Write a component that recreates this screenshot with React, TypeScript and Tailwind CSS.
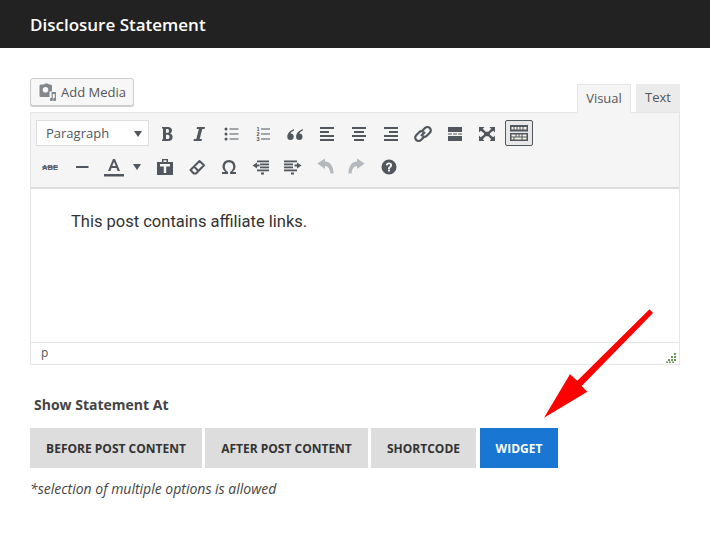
import React from 'react';

const ICON = '#50575e';

// tinymce toolbar glyphs, 20x20 box
function Svg({ children, color = ICON }: { children: React.ReactNode; color?: string }) {
  return (
    <svg width="20" height="20" viewBox="0 0 20 20" fill={color} xmlns="http://www.w3.org/2000/svg">
      {children}
    </svg>
  );
}

function Btn({ children }: { children: React.ReactNode }) {
  return <div className="w-8 h-[26px] flex items-center justify-center shrink-0">{children}</div>;
}

const lines = (rows: [number, number, number][], h = 2) =>
  rows.map(([x, y, w], i) => <rect key={i} x={x} y={y} width={w} height={h} />);

const quote = 'M9 5C5 6.500 2.300 9.500 2.300 12.800a3.200 3.200 0 1 0 3.200-3.200c.3-1 1.500-1.900 3.500-3z';

const row1 = [
  // bold
  <Svg key="b"><path d="M5 3h6c2.500 0 4 1.300 4 3.500 0 1.400-.8 2.500-2 3 1.600.4 2.600 1.700 2.600 3.400C15.600 15.500 14 17 11.200 17H5v-1.500h1V4.500H5zm4 2v3.800h1.400c1 0 1.600-.7 1.600-1.900S11.400 5 10.400 5zm0 5.700V15h1.700c1.100 0 1.800-.8 1.800-2.100s-.7-2.200-1.800-2.200z" /></Svg>,
  // italic
  <Svg key="i"><path d="M8 3h8l-.4 2h-2.300l-2.600 10h2.200l-.4 2H4.500l.4-2h2.400L9.900 5H7.600z" /></Svg>,
  // bullet list
  <Svg key="ul"><circle cx="5" cy="5" r="1.500" /><circle cx="5" cy="10" r="1.500" /><circle cx="5" cy="15" r="1.500" /><rect x="8.500" y="4.500" width="9" height="1" /><rect x="8.500" y="9.500" width="9" height="1" /><rect x="8.500" y="14.500" width="9" height="1" /></Svg>,
  // numbered list
  <Svg key="ol"><text x="3.500" y="6.500" fontSize="5.500" fontWeight="700" fontFamily="'Liberation Sans', sans-serif">1</text><text x="3.500" y="11.500" fontSize="5.500" fontWeight="700" fontFamily="'Liberation Sans', sans-serif">2</text><text x="3.500" y="16.500" fontSize="5.500" fontWeight="700" fontFamily="'Liberation Sans', sans-serif">3</text><rect x="8" y="4.500" width="9" height="1" /><rect x="8" y="9.500" width="9" height="1" /><rect x="8" y="14.500" width="9" height="1" /></Svg>,
  // blockquote
  <Svg key="q"><path d={quote} /><path d={quote} transform="translate(8.800 0)" /></Svg>,
  // align left
  <Svg key="al">{lines([[3, 3, 14], [3, 7, 9], [3, 11, 14], [3, 15, 14]])}</Svg>,
  // align center
  <Svg key="ac">{lines([[3, 3, 14], [5, 7, 10], [3, 11, 14], [5, 15, 10]])}</Svg>,
  // align right
  <Svg key="ar">{lines([[3, 3, 14], [8, 7, 9], [3, 11, 14], [3, 15, 14]])}</Svg>,
  // link
  <Svg key="link"><path fill="none" stroke={ICON} strokeWidth="2.200" d="M8 12l4-4M9.500 6.500l2.500-2.500a3.400 3.400 0 0 1 4.800 0 3.400 3.400 0 0 1 0 4.800l-3 3a3.400 3.400 0 0 1-4.200.4M10.500 13.500l-2.500 2.500a3.400 3.400 0 0 1-4.800 0 3.400 3.400 0 0 1 0-4.800l3-3a3.400 3.400 0 0 1 4.200-.4" /></Svg>,
  // read more
  <Svg key="more"><path d="M3 3h14v5H3zM3 12h14v5H3z" /><rect x="3" y="9.500" width="4" height="1" /><rect x="8" y="9.500" width="4" height="1" /><rect x="13" y="9.500" width="4" height="1" /></Svg>,
  // fullscreen
  <Svg key="fs"><path d="M2 3h5.500L5.800 4.700 8.600 7.800h2.800l2.800-3.100L12.500 3H18v5.500l-1.700-1.700-3.300 2.400v1.600l3.300 2.400 1.700-1.700V17h-5.500l1.700-1.700-2.800-3.100H8.600l-2.800 3.100L7.500 17H2v-5.500l1.700 1.700L7 10.800V9.200L3.700 6.800 2 8.500z" /></Svg>,
];

const row2 = [
  // strikethrough ABC
  <Svg key="abe"><text x="10" y="13" textAnchor="middle" fontSize="7.500" fontWeight="700" fontFamily="'Liberation Sans', sans-serif">ABE</text><rect x="2" y="9.500" width="16" height="1" /></Svg>,
  <Svg key="hr"><rect x="4" y="9" width="12.500" height="2" /></Svg>,
  // text colour
  <Svg key="a"><path d="M9 2h2l5 12h-2.400l-1.100-3h-5l-1.100 3H4zm1 2.800L8.200 9h3.600z" /><rect x="0" y="17" width="20" height="2.500" /></Svg>,
];

const row3 = [
  // paste as text
  <Svg key="paste"><path fillRule="evenodd" d="M7 2h6v3h5v13H2V5h5zM8.500 3.200v1.800h3V3.200zM5 7v2.500h3.800V16h2.400V9.500H15V7z" /></Svg>,
  // eraser
  <Svg key="eraser"><path fill="none" stroke={ICON} strokeWidth="2" strokeLinejoin="round" d="M12.500 4l4.500 4.200-8 8.300h-2.200L3.500 13zM7 9.500l4.500 4.500" /></Svg>,
  // omega
  <Svg key="omega"><path d="M3 17v-2h3.500C4.500 13.500 3.500 11.500 3.500 9.500 3.500 5.800 6.300 3 10 3s6.500 2.800 6.500 6.500c0 2-1 4-3 5.500H17v2h-6v-2c2-1 3.200-3 3.200-5.500 0-2.500-1.700-4.300-4.200-4.300S5.800 7 5.800 9.500c0 2.500 1.200 4.500 3.200 5.500v2z" /></Svg>,
  // outdent
  <Svg key="outdent">{lines([[6, 3.500, 12], [9, 6.500, 9], [9, 9.500, 9], [6, 12.500, 12]], 1.800)}<rect x="10" y="15.500" width="3" height="2" /><path d="M1.500 8.500l4.500-3v2h2.500v2H6v2z" /></Svg>,
  // indent
  <Svg key="indent">{lines([[1, 3.500, 13], [1, 6.500, 9], [1, 9.500, 9], [1, 12.500, 13]], 1.800)}<rect x="8" y="15.500" width="3" height="2" /><path d="M18.500 8.500l-4.500-3v2h-2.500v2H14v2z" /></Svg>,
  // undo
  <Svg key="undo" color="#b4b9be"><path d="M2.300 6.500L10 1.500v3c5 0 8.500 4.500 8.500 12h-3c-.5-4.500-2.500-7.500-5.500-7.500v3z" /></Svg>,
  // redo
  <Svg key="redo" color="#b4b9be"><path transform="translate(20 0) scale(-1 1)" d="M2.300 6.500L10 1.500v3c5 0 8.500 4.500 8.500 12h-3c-.5-4.500-2.500-7.500-5.500-7.500v3z" /></Svg>,
  // help
  <Svg key="help"><path fillRule="evenodd" d="M10 2.500a7.500 7.500 0 1 1 0 15 7.500 7.500 0 0 1 0-15zM9 12.500v2h2v-2zM10 5.500c-1.800 0-3 1-3.200 2.700l1.900.3c.1-.8.600-1.200 1.300-1.200s1.100.4 1.100 1c0 .5-.3.800-.9 1.300-.8.600-1.200 1.200-1.200 2.200v.2h1.900c0-.6.200-.9.800-1.400.8-.7 1.400-1.300 1.400-2.400 0-1.500-1.200-2.700-3.100-2.700z" /></Svg>,
];

export default function App() {
  const options = [
    { label: 'Before Post Content', w: 'w-[172px]' },
    { label: 'After Post Content', w: 'w-[163px]' },
    { label: 'Shortcode', w: 'w-[105px]' },
  ];

  return (
    <div className="relative w-[710px] h-[557px] bg-white overflow-hidden font-['Open_Sans',sans-serif] text-[#444]">
      {/* header */}
      <div className="h-12 bg-[#222222] pl-[30px] pt-[2px] flex items-center">
        <h1 className="text-[17px] font-semibold text-white">Disclosure Statement</h1>
      </div>

      <div className="px-[30px] pt-[30px]">
        {/* media button + tabs */}
        <div className="flex items-start justify-between h-[34px]">
          <button className="w-[104px] h-7 flex items-center gap-1 pl-2 bg-[#f7f7f7] border border-[#cccccc] rounded-[3px] shadow-[0_1px_0_#cccccc] text-[13px] text-[#555]">
            <svg width="18" height="18" viewBox="0 0 18 18" fill="#82878c" xmlns="http://www.w3.org/2000/svg">
              <path fillRule="evenodd" d="M2 1.500h3l1-1h3l1 1h1.500A1.500 1.500 0 0 1 13 3v5.500H10.500V14H2A1.500 1.500 0 0 1 .5 12.500V3A1.500 1.500 0 0 1 2 1.500zM6.500 4a2.800 2.800 0 1 0 0 5.600 2.800 2.800 0 0 0 0-5.600z" />
              <path d="M17 9v7.500a1.500 1.500 0 1 1-1.200-1.400V11h-2v5.500a1.500 1.500 0 1 1-1.200-1.400V9z" />
            </svg>
            <span className="pt-[2px]">Add Media</span>
          </button>
          <div className="flex items-start gap-[5px] pt-[6px] relative z-10">
            <div className="w-[54px] h-[29px] bg-[#f5f5f5] border border-[#e5e5e5] border-b-[#f5f5f5] flex items-center justify-center text-[13px] text-[#555]">Visual</div>
            <div className="w-[44px] h-[28px] bg-[#ebebeb] flex items-center justify-center text-[13px] text-[#555]">Text</div>
          </div>
        </div>

        {/* editor */}
        <div className="border border-[#e5e5e5] border-t-0 h-[253px] flex flex-col">
          <div className="h-[77px] bg-[#f5f5f5] border-t border-[#e5e5e5] border-b-2 border-b-[#dddddd] pt-[7px] pl-[3px]">
            <div className="flex items-center h-[26px]">
              <div className="ml-[2px] mr-[2px] w-[113px] h-[26px] bg-white border border-[#dddddd] flex items-center justify-between pl-[9px] pr-[5px] pt-[1px] text-[13px] text-[#50575e]">
                Paragraph
                <span className="w-0 h-0 border-x-[4px] border-x-transparent border-t-[6px] border-t-[#50575e] mr-[1px]" />
              </div>
              <div className="flex pt-[1px]">
                {row1.map((icon, i) => <Btn key={i}>{icon}</Btn>)}
              </div>
              <div className="ml-[2px] w-[28px] h-[26px] bg-[#e8e8e8] border border-[#50575e] rounded-[2px] flex items-center justify-center">
                <svg width="20" height="20" viewBox="0 0 20 20" fill={ICON} xmlns="http://www.w3.org/2000/svg">
                  <rect x="1" y="2" width="18" height="6.500" />
                  <rect x="1" y="10" width="18" height="8" />
                  <path fill="#f0efe0" d="M2.500 4h2v2.500h-2zM5.500 4h2v2.500h-2zM8.500 4h2v2.500h-2zM11.500 4h2v2.500h-2zM14.500 4h3v2.500h-3zM2.500 11.500h4v2h-4zM7.500 11.500h2v2h-2zM10.500 11.500h2v2h-2zM13.500 11.500h4v2h-4zM2.500 14.500h2v2h-2zM5.500 14.500h7v2h-7zM13.500 14.500h4v2h-4z" />
                </svg>
              </div>
            </div>
            <div className="flex items-center h-[26px] mt-[8px]">
              {row2.map((icon, i) => <Btn key={i}>{icon}</Btn>)}
              <span className="ml-[3px] mr-[8px] w-0 h-0 border-x-[4px] border-x-transparent border-t-[6px] border-t-[#50575e]" />
              {row3.map((icon, i) => <Btn key={i}>{icon}</Btn>)}
            </div>
          </div>

          <div className="flex-1 pl-10 pt-[21px] text-[16.5px] leading-6 font-['Roboto',sans-serif] text-[#333]">
            This post contains affiliate links.
          </div>

          <div className="h-[22px] border-t border-[#e5e5e5] pl-[10px] pb-[2px] flex items-center justify-between pr-[3px] text-[12px] text-[#555]">
            p
            <svg width="10" height="10" viewBox="0 0 10 10" className="self-end -mb-[1px]" fill="#6a9a5b" xmlns="http://www.w3.org/2000/svg">
              <path d="M8 0h2v2H8zM5 3h2v2H5zM8 3h2v2H8zM2 6h2v2H2zM5 6h2v2H5zM8 6h2v2H8zM0 8.500h2v1.500H0zM3 8.500h2v1.500H3zM6 8.500h2v1.500H6z" />
            </svg>
          </div>
        </div>

        <h2 className="mt-[30px] ml-1 text-[14px] leading-5 font-bold text-[#444]">Show Statement At</h2>

        {/* options */}
        <div className="flex gap-[3px] mt-[13px]">
          {options.map((o) => (
            <button key={o.label} className={`${o.w} h-10 pt-[1px] bg-[#dddddd] text-[12px] font-bold uppercase text-[#333]`}>{o.label}</button>
          ))}
          <button className="w-[78px] ml-[1px] h-10 pt-[1px] bg-[#1976d2] text-[12px] font-bold uppercase text-white">Widget</button>
        </div>

        <p className="mt-[11px] text-[14px] leading-5 italic text-[#444]">*selection of multiple options is allowed</p>
      </div>

      {/* annotation arrow */}
      <svg className="absolute left-0 top-0 pointer-events-none" width="710" height="557" viewBox="0 0 710 557" xmlns="http://www.w3.org/2000/svg">
        <path d="M649.500 309.300L653 313 581.700 386 587.300 391.700 544 417.700 570 374.300 577.300 380.700z" fill="#ff0000" />
      </svg>
    </div>
  );
}
